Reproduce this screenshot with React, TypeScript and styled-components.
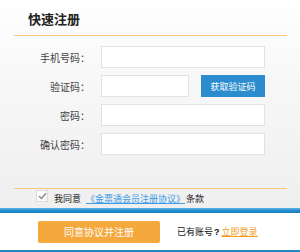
import React from "react";
import styled, { createGlobalStyle } from "styled-components";

const GlobalStyle = createGlobalStyle`
  html, body {
    margin: 0;
    padding: 0;
    background: #fff;
  }
  body {
    font-family: "Noto Sans CJK SC", "Noto Sans", sans-serif;
    color: #333;
  }
`;

const fields = [
  { label: "手机号码：", short: false },
  { label: "验证码：", short: true },
  { label: "密码：", short: false },
  { label: "确认密码：", short: false },
];

const App = () => {
  return (
    <Page>
      <GlobalStyle />
      <TopPanel>
        <Header>
          <Title>快速注册</Title>
        </Header>
        <Form>
          {fields.map((f) => (
            <Row key={f.label}>
              <Label>{f.label}</Label>
              <Field>
                <Input short={f.short} />
                {f.short && <CodeButton>获取验证码</CodeButton>}
              </Field>
            </Row>
          ))}
        </Form>
        <Agree>
          <CheckBox>
            <svg width="9" height="8" viewBox="0 0 9 8">
              <path d="M1 4.2 L3.4 6.5 L8 1.2" fill="none" stroke="#8a8a8a" strokeWidth="1.4" />
            </svg>
          </CheckBox>
          <AgreeText>我同意</AgreeText>
          <AgreeLink href="#">《金票通会员注册协议》</AgreeLink>
          <AgreeText>条款</AgreeText>
        </Agree>
      </TopPanel>
      <BlueBar />
      <Footer>
        <SubmitButton>同意协议并注册</SubmitButton>
        <LoginHint>
          已有账号<b>?</b>
          <LoginLink href="#">立即登录</LoginLink>
        </LoginHint>
      </Footer>
      <BottomLine />
    </Page>
  );
};

export default App;

const Page = styled.div`
  width: 300px;
  height: 252px;
  overflow: hidden;
  display: flex;
  flex-direction: column;
`;

const TopPanel = styled.div`
  height: 208px;
  padding: 0 13px 0 14px;
  box-sizing: border-box;
  background: linear-gradient(#ffffff 0%, #f7f7f7 40%, #efefef 100%);
  display: flex;
  flex-direction: column;
`;

const Header = styled.div`
  height: 36px;
  border-bottom: 1px solid #fcc57c;
  display: flex;
  align-items: center;
  padding-left: 14px;
  box-sizing: border-box;
`;

const Title = styled.h1`
  margin: 2px 0 0;
  font-size: 13px;
  font-weight: bold;
  color: #222;
  line-height: 1;
`;

const Form = styled.div`
  margin-top: 10px;
  display: flex;
  flex-direction: column;
  gap: 7px;
`;

const Row = styled.div`
  display: grid;
  grid-template-columns: 76px 1fr;
  column-gap: 11px;
  align-items: center;
`;

const Label = styled.span`
  text-align: right;
  font-size: 10px;
  color: #444;
  white-space: nowrap;
`;

const Field = styled.div`
  display: flex;
  align-items: center;
  gap: 12px;
`;

const Input = styled.input<{ short?: boolean }>`
  width: ${(p) => (p.short ? "88px" : "164px")};
  height: 22px;
  box-sizing: border-box;
  border: 1px solid #e2e2e2;
  background: #fff;
  outline: none;
  margin: 0;
  padding: 0 4px;
`;

const CodeButton = styled.button`
  width: 64px;
  height: 22px;
  border: none;
  margin: 0;
  padding: 0;
  background: #2b8dcd;
  color: #fff;
  font-family: inherit;
  font-size: 9px;
`;

const Agree = styled.div`
  margin-top: 33px;
  border-top: 1px solid #fcc57c;
  display: flex;
  align-items: center;
  padding-left: 22px;
  height: 12px;
  font-size: 9px;
`;

const CheckBox = styled.span`
  width: 10px;
  height: 10px;
  margin-top: 1px;
  border: 1px solid #dcdcdc;
  background: #fafafa;
  display: flex;
  align-items: center;
  justify-content: center;
  margin-right: 6px;
`;

const AgreeText = styled.span`
  color: #222;
  margin-top: 6px;
`;

const AgreeLink = styled.a`
  color: #3d9be6;
  margin: 6px 1px 0 5px;
`;

const BlueBar = styled.div`
  height: 5px;
  background: linear-gradient(#5db3e6, #1a86c8 60%, #1d80bd);
`;

const Footer = styled.div`
  flex: 1;
  background: #fff;
  display: flex;
  align-items: center;
  padding-left: 38px;
  gap: 17px;
`;

const SubmitButton = styled.button`
  width: 122px;
  height: 22px;
  border: none;
  margin: 0;
  padding: 0;
  border-radius: 2px;
  background: #f5a83b;
  color: #fff;
  font-family: inherit;
  font-size: 10px;
`;

const LoginHint = styled.span`
  font-size: 9px;
  color: #111;

  b {
    font-family: "Liberation Sans", sans-serif;
    margin: 0 2px 0 1px;
  }
`;

const LoginLink = styled.a`
  color: #f39c1b;
`;

const BottomLine = styled.div`
  height: 2px;
  background: #2189c9;
`;
